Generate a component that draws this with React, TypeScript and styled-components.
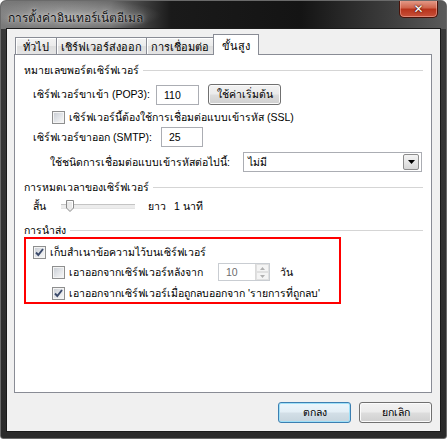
import React from "react";
import styled, { createGlobalStyle, css } from "styled-components";

const Global = createGlobalStyle`
  html, body { margin: 0; padding: 0; }
  body {
    width: 447px; height: 439px; overflow: hidden; background: #ffffff;
    font-family: Tahoma, "Liberation Sans", sans-serif; font-size: 10.5px; color: #000;
  }
  * { box-sizing: border-box; }
`;

const Window = styled.div`
  width: 447px;
  height: 439px;
  display: flex;
  flex-direction: column;
  background: linear-gradient(180deg, #3a3a3a 0%, #2a2a2a 100%);
  border: 1px solid #6a6a6a;
  border-radius: 6px 6px 3px 3px;
  overflow: hidden;
`;

const TitleBar = styled.div`
  height: 28px;
  flex: none;
  display: flex;
  justify-content: space-between;
  align-items: flex-start;
  padding-left: 7px;
  background:
    radial-gradient(ellipse 90px 16px at 70px 14px, rgba(200, 200, 200, 0.55), rgba(200, 200, 200, 0) 100%),
    linear-gradient(90deg, #7a7a7a 0px, #6a6a6a 110px, #1a1a1a 170px, #141414 300px, #3e3e3e 390px, #5c5c5c 447px);
`;

const TitleText = styled.span`
  margin-top: 7px;
  font-size: 12px;
  color: #111;
  text-shadow: 0 0 6px rgba(255, 255, 255, 0.7), 0 0 2px rgba(255, 255, 255, 0.6);
`;

const CloseButton = styled.div`
  width: 39px;
  height: 18px;
  margin-right: 8px;
  margin-top: -1px;
  display: flex;
  align-items: center;
  justify-content: center;
  border: 1px solid #4a1208;
  border-top: none;
  border-radius: 0 0 5px 5px;
  background: linear-gradient(180deg, #e6a08f 0%, #d0664e 45%, #b8341c 55%, #c8513a 100%);
  box-shadow: inset 0 0 0 1px rgba(255, 200, 190, 0.45);
  color: #fff;
  font-family: "DejaVu Sans", sans-serif;
  font-weight: bold;
  font-size: 12px;
  text-shadow: 0 0 2px #3a0a00, 0 0 1px #3a0a00;
`;

const Client = styled.div`
  flex: 1;
  margin: 0 6px 7px 6px;
  background: #f0f0f0;
  box-shadow: 0 0 0 1px #1a1a1a;
  display: flex;
  flex-direction: column;
  padding: 5px 8px 8px 7px;
`;

const TabRow = styled.div`
  height: 20px;
  display: flex;
  align-items: flex-end;
  padding-left: 1px;
  position: relative;
  z-index: 1;
`;

const Tab = styled.div<{ $active?: boolean; $w: number }>`
  width: ${(p) => p.$w}px;
  height: 17px;
  display: flex;
  align-items: center;
  justify-content: center;
  border: 1px solid #898c95;
  border-bottom: none;
  margin-right: -1px;
  font-size: 11px;
  background: linear-gradient(180deg, #f3f3f3 0%, #ebebeb 50%, #dedede 51%, #e4e4e4 100%);
  box-shadow: inset 1px 1px 0 #fff;
  padding-top: 1px;
  ${(p) =>
    p.$active &&
    css`
      height: 21px;
      margin-bottom: -1px;
      background: #ffffff;
      box-shadow: none;
      align-items: flex-start;
      padding-top: 2px;
    `}
`;

const Panel = styled.div`
  height: 339px;
  background: #ffffff;
  border: 1px solid #898c95;
  display: flex;
  flex-direction: column;
  padding: 8px 8px 0 9px;
`;

const GroupHeader = styled.div<{ $mt: number }>`
  display: flex;
  align-items: center;
  height: 14px;
  margin-top: ${(p) => p.$mt}px;
  white-space: nowrap;
  &::after {
    content: "";
    flex: 1;
    height: 1px;
    margin-left: 4px;
    background: #d5d5d5;
  }
`;

const Row = styled.div<{ $mt: number; $indent: number; $h?: number }>`
  display: flex;
  align-items: center;
  height: ${(p) => p.$h ?? 20}px;
  margin-top: ${(p) => p.$mt}px;
  padding-left: ${(p) => p.$indent}px;
  white-space: nowrap;
`;

const Label = styled.span<{ $w?: number }>`
  flex: none;
  ${(p) => p.$w !== undefined && css`width: ${p.$w}px;`}
`;

const TextBox = styled.div<{ $w: number }>`
  width: ${(p) => p.$w}px;
  height: 20px;
  border: 1px solid #abadb3;
  background: #fff;
  display: flex;
  align-items: center;
  padding-left: 7px;
`;

const Button = styled.div<{ $default?: boolean }>`
  width: 73px;
  height: 21px;
  flex: none;
  display: flex;
  align-items: center;
  justify-content: center;
  border: 1px solid #707070;
  border-radius: 3px;
  background: linear-gradient(180deg, #f2f2f2 0%, #ebebeb 48%, #dddddd 52%, #cfcfcf 100%);
  box-shadow: inset 0 0 0 1px #fbfbfb;
  ${(p) =>
    p.$default &&
    css`
      border-color: #3c7fb1;
      box-shadow: inset 0 0 0 1px #9fe0f8;
      background: linear-gradient(180deg, #eaf6fd 0%, #e3eef5 48%, #d3dfe7 52%, #c6d4dd 100%);
    `}
`;

const CheckWrap = styled.div`
  width: 13px;
  height: 13px;
  flex: none;
  margin-right: 4px;
  border: 1px solid #8e8f8f;
  background: #f4f4f4;
  padding: 1px;
  display: flex;
`;

const CheckInner = styled.div`
  flex: 1;
  background: linear-gradient(135deg, #cbcfd5 0%, #dfe2e6 45%, #f6f6f6 100%);
  display: flex;
  align-items: center;
  justify-content: center;
`;

const Check = ({ on }: { on?: boolean }) => (
  <CheckWrap>
    <CheckInner>
      {on && (
        <svg width="9" height="9" viewBox="0 0 9 9">
          <path d="M1 4.5 L3.3 7 L8 1" fill="none" stroke="#3b4a6b" strokeWidth="1.9" />
        </svg>
      )}
    </CheckInner>
  </CheckWrap>
);

const Select = styled.div`
  width: 179px;
  height: 20px;
  border: 1px solid #abadb3;
  background: #fff;
  display: flex;
  align-items: center;
  justify-content: space-between;
  padding: 1px 2px 1px 4px;
`;

const DropBtn = styled.div`
  width: 16px;
  height: 16px;
  border: 1px solid #8c8c8c;
  border-radius: 2px;
  background: linear-gradient(180deg, #f4f4f4 0%, #e6e6e6 50%, #d6d6d6 100%);
  display: flex;
  align-items: center;
  justify-content: center;
`;

const SliderTrack = styled.div`
  width: 74px;
  height: 20px;
  margin: 0 13px 0 11px;
  position: relative;
  display: flex;
  align-items: center;
  &::before {
    content: "";
    flex: 1;
    height: 3px;
    border-top: 1px solid #c4c4c4;
    border-bottom: 1px solid #e4e4e4;
    background: #ececec;
  }
`;

const Thumb = styled.svg`
  position: absolute;
  left: 5px;
  top: 4px;
`;

const RedBox = styled.div`
  width: 317px;
  border: 2px solid #ff0000;
  padding: 6px 0 2px 7px;
  display: flex;
  flex-direction: column;
`;

const Spin = styled.div`
  width: 52px;
  height: 18px;
  border: 1px solid #c9cdd2;
  background: #fff;
  display: flex;
  align-items: center;
  justify-content: space-between;
  padding-left: 7px;
  margin-right: 10px;
  color: #6d6d6d;
`;

const SpinBtns = styled.div`
  width: 14px;
  height: 16px;
  display: flex;
  flex-direction: column;
  border-left: 1px solid #dadada;
`;

const SpinHalf = styled.div`
  flex: 1;
  display: flex;
  align-items: center;
  justify-content: center;
  border: 1px solid #e0e0e0;
  background: #f4f4f4;
`;

const Footer = styled.div`
  margin-top: 9px;
  height: 21px;
  display: flex;
  justify-content: flex-end;
  gap: 8px;
`;

export default function App() {
  return (
    <>
      <Global />
      <Window>
        <TitleBar>
          <TitleText>การตั้งค่าอินเทอร์เน็ตอีเมล</TitleText>
          <CloseButton>✕</CloseButton>
        </TitleBar>
        <Client>
          <TabRow>
            <Tab $w={42}>ทั่วไป</Tab>
            <Tab $w={91}>เชิร์ฟเวอร์ส่งออก</Tab>
            <Tab $w={68}>การเชื่อมต่อ</Tab>
            <Tab $w={46} $active>ขั้นสูง</Tab>
          </TabRow>
          <Panel>
            <GroupHeader $mt={0}>หมายเลขพอร์ตเซิร์ฟเวอร์</GroupHeader>
            <Row $mt={7} $indent={9} $h={21}>
              <Label $w={123}>เซิร์ฟเวอร์ขาเข้า (POP3):</Label>
              <TextBox $w={43}>110</TextBox>
              <Label $w={9} />
              <Button>ใช้ค่าเริ่มต้น</Button>
            </Row>
            <Row $mt={5} $indent={28} $h={14}>
              <Check />
              <Label>เซิร์ฟเวอร์นี้ต้องใช้การเชื่อมต่อแบบเข้ารหัส (SSL)</Label>
            </Row>
            <Row $mt={3} $indent={9}>
              <Label $w={128}>เซิร์ฟเวอร์ขาออก (SMTP):</Label>
              <TextBox $w={42}>25</TextBox>
            </Row>
            <Row $mt={5} $indent={26}>
              <Label $w={193}>ใช้ชนิดการเชื่อมต่อแบบเข้ารหัสต่อไปนี้:</Label>
              <Select>
                <span>ไม่มี</span>
                <DropBtn>
                  <svg width="7" height="4" viewBox="0 0 7 4">
                    <path d="M0 0 H7 L3.5 4 Z" fill="#000" />
                  </svg>
                </DropBtn>
              </Select>
            </Row>
            <GroupHeader $mt={8}>การหมดเวลาของเซิร์ฟเวอร์</GroupHeader>
            <Row $mt={2} $indent={9}>
              <Label $w={17}>สั้น</Label>
              <SliderTrack>
                <Thumb width="8" height="12" viewBox="0 0 8 12">
                  <path d="M0.5 0.5 H7.5 V8 L4 11.5 L0.5 8 Z" fill="#e9e9e9" stroke="#8a8a8a" />
                  <path d="M1.5 1.5 H6.5 V7.5" fill="none" stroke="#fff" />
                </Thumb>
              </SliderTrack>
              <Label $w={26}>ยาว</Label>
              <Label>1 นาที</Label>
            </Row>
            <GroupHeader $mt={7}>การนำส่ง</GroupHeader>
            <RedBox>
              <Row $mt={0} $indent={0} $h={14}>
                <Check on />
                <Label>เก็บสำเนาข้อความไว้บนเซิร์ฟเวอร์</Label>
              </Row>
              <Row $mt={4} $indent={19} $h={18}>
                <Check />
                <Label $w={149}>เอาออกจากเซิร์ฟเวอร์หลังจาก</Label>
                <Spin>
                  <span>10</span>
                  <SpinBtns>
                    <SpinHalf>
                      <svg width="5" height="3" viewBox="0 0 5 3">
                        <path d="M0 3 H5 L2.5 0 Z" fill="#b0b0b0" />
                      </svg>
                    </SpinHalf>
                    <SpinHalf>
                      <svg width="5" height="3" viewBox="0 0 5 3">
                        <path d="M0 0 H5 L2.5 3 Z" fill="#b0b0b0" />
                      </svg>
                    </SpinHalf>
                  </SpinBtns>
                </Spin>
                <Label>วัน</Label>
              </Row>
              <Row $mt={5} $indent={19} $h={14}>
                <Check on />
                <Label>เอาออกจากเซิร์ฟเวอร์เมื่อถูกลบออกจาก 'รายการที่ถูกลบ'</Label>
              </Row>
            </RedBox>
          </Panel>
          <Footer>
            <Button $default>ตกลง</Button>
            <Button>ยกเลิก</Button>
          </Footer>
        </Client>
      </Window>
    </>
  );
}
